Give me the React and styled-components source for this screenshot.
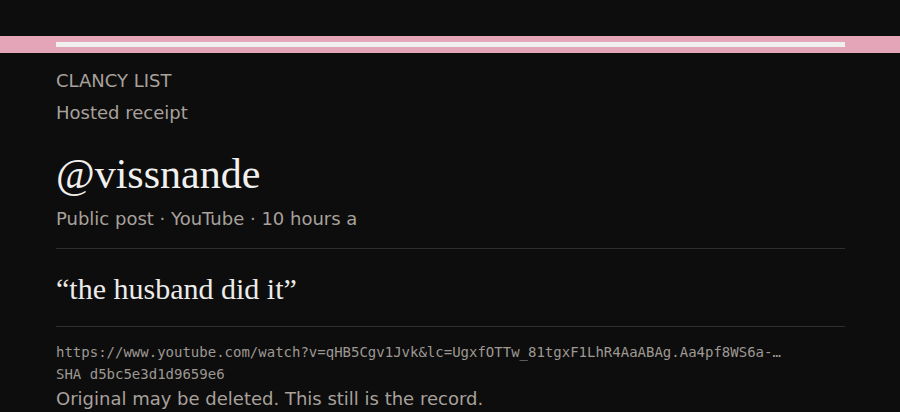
import styled, { createGlobalStyle } from "styled-components";

const Global = createGlobalStyle`
  html, body {
    margin: 0;
    padding: 0;
    background: #0d0d0d;
  }
  body {
    font-family: "DejaVu Sans", sans-serif;
  }
`;

const Page = styled.div`
  background: #0d0d0d;
  min-height: 412px;
  padding-top: 36px;
  overflow: hidden;
`;

const Ribbon = styled.div`
  background: #e5a5b8;
  padding: 6px 55px 6px 56px;
`;

const Track = styled.div`
  height: 5px;
  background: #f0efef;
`;

const Body = styled.main`
  padding: 16px 55px 0 56px;
`;

const Brand = styled.div`
  font-size: 18px;
  line-height: 24px;
  color: #a8a19c;
  text-transform: uppercase;
`;

const Kicker = styled.div`
  margin-top: 8px;
  font-size: 18px;
  line-height: 24px;
  color: #a8a19c;
`;

const Handle = styled.h1`
  margin: 24px 0 0;
  font-family: "Liberation Serif", serif;
  font-weight: normal;
  font-size: 42px;
  line-height: 50px;
  color: #f2f0ee;
`;

const Meta = styled.div`
  margin-top: 8px;
  font-size: 18px;
  line-height: 24px;
  color: #a8a19c;
`;

const Rule = styled.hr`
  border: 0;
  border-top: 1px solid #2e2e2e;
  margin: ${({ $top }) => $top}px 0 0;
`;

const Quote = styled.blockquote`
  margin: 20px 0 0;
  font-family: "Liberation Serif", serif;
  font-size: 30px;
  line-height: 40px;
  color: #ecebe9;
`;

const Mono = styled.div`
  font-family: "DejaVu Sans Mono", monospace;
  font-size: 14px;
  line-height: 22px;
  color: #9d9893;
  white-space: nowrap;
  overflow: hidden;
  text-overflow: ellipsis;
  max-width: 728px;
  margin-top: ${({ $top }) => $top || 0}px;
`;

const Note = styled.p`
  margin: 2px 0 0;
  font-size: 18px;
  line-height: 24px;
  color: #a8a19c;
`;

const App = () => {
  return (
    <Page>
      <Global />
      <Ribbon>
        <Track />
      </Ribbon>
      <Body>
        <Brand>Clancy List</Brand>
        <Kicker>Hosted receipt</Kicker>
        <Handle>@vissnande</Handle>
        <Meta>Public post · YouTube · 10 hours a</Meta>
        <Rule $top={17} />
        <Quote>“the husband did it”</Quote>
        <Rule $top={17} />
        <Mono $top={14}>
          https://www.youtube.com/watch?v=qHB5Cgv1Jvk&lc=UgxfOTTw_81tgxF1LhR4AaABAg.Aa4pf8WS6a-KLbTmp1
        </Mono>
        <Mono>SHA d5bc5e3d1d9659e6</Mono>
        <Note>Original may be deleted. This still is the record.</Note>
      </Body>
    </Page>
  );
};

export default App;
